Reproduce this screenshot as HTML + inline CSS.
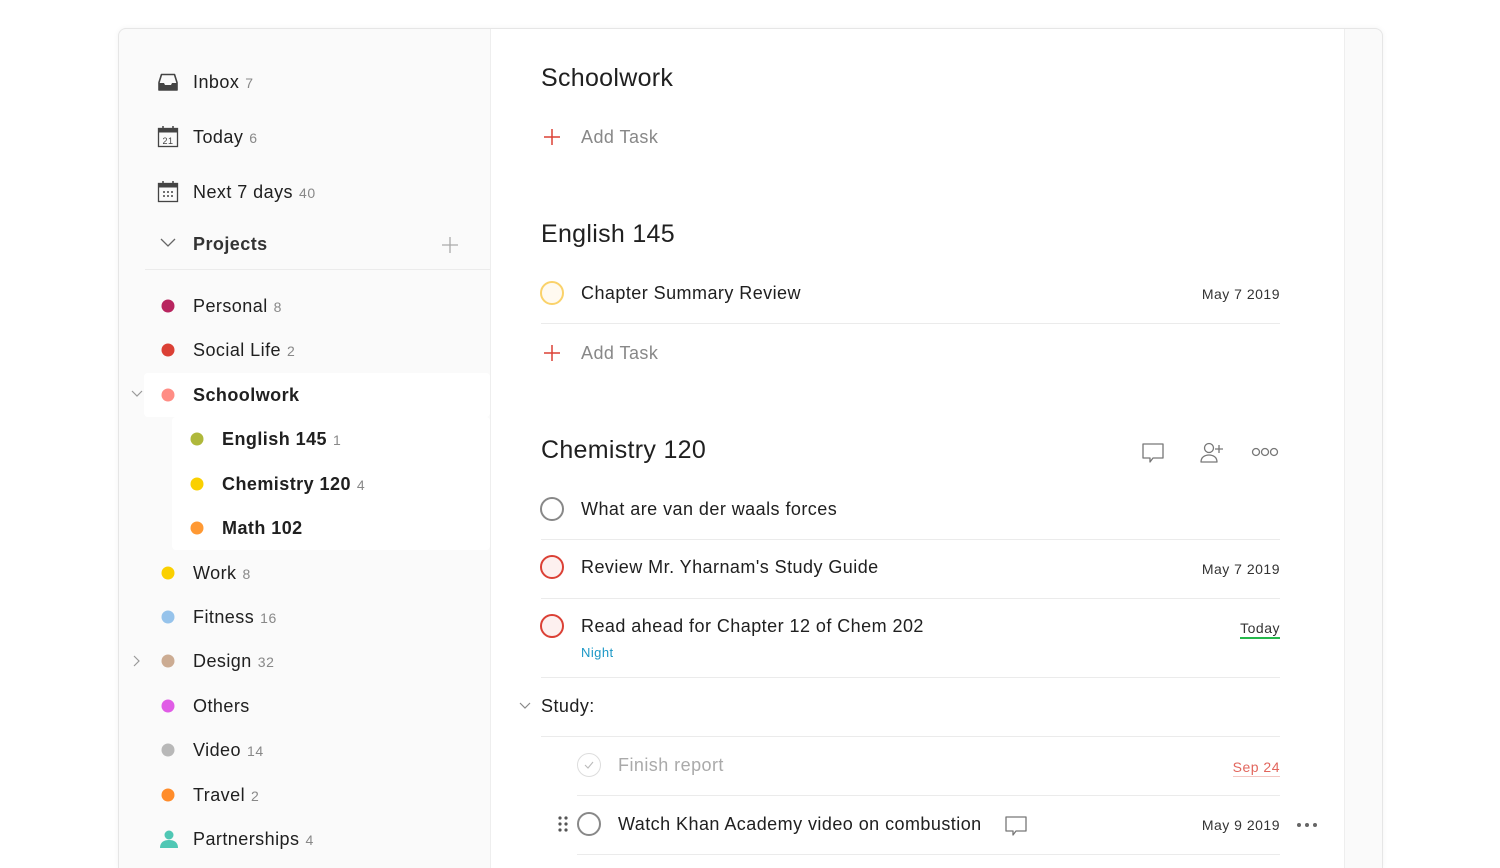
<!DOCTYPE html>
<html style="width:1500px;height:868px;overflow:hidden"><head><meta charset="utf-8"><style>
*{margin:0;padding:0;box-sizing:border-box}
body{width:1500px;height:868px;background:#fff;font-family:"Liberation Sans",sans-serif;color:#202020;position:relative;overflow:hidden;letter-spacing:.45px}
.win{position:absolute;left:118px;top:28px;width:1265px;height:840px;border:1px solid #e6e6e6;border-bottom:none;border-radius:8px 8px 0 0;background:#fafafa;box-shadow:0 0 6px rgba(0,0,0,.05);overflow:hidden}
.main{position:absolute;left:490px;top:29px;width:855px;height:839px;background:#fff;border-left:1px solid #eee;border-right:1px solid #eee}
.a{position:absolute;white-space:nowrap}
.t{font-size:18px;line-height:22px;transform:translateY(-11px)}
.c{font-size:14px;color:#888;margin-left:6px;letter-spacing:.6px}
.b{font-weight:bold}
.dot{position:absolute;width:13px;height:13px;border-radius:50%;transform:translate(-6.5px,-6.5px)}
.h{font-size:25px;line-height:30px;transform:translateY(-15px);color:#202020;letter-spacing:.3px}
.line{position:absolute;height:1px;background:#ebebeb}
.circ{position:absolute;width:24px;height:24px;border-radius:50%;transform:translate(-12px,-12px);border:2px solid #888}
.date{font-size:14px;line-height:18px;transform:translateY(-9px);color:#333;letter-spacing:.5px}
.add{font-size:18px;color:#888}
</style></head><body>
<div class="win"></div>
<div class="main"></div>
<div class="a" style="left:144px;top:373px;width:346px;height:44px;background:#fff;border-radius:4px"></div>
<div class="a" style="left:172px;top:417px;width:318px;height:133px;background:#fff;border-radius:4px"></div>
<div class="line" style="left:145px;top:269px;width:345px"></div>

<svg class="a" style="left:157px;top:71px" width="22" height="22" viewBox="0 0 22 22"><path d="M4.5 3.5h13l2.5 8v7.5H2v-7.5z" fill="none" stroke="#444" stroke-width="1.6" stroke-linejoin="round"/><path d="M2 12h5l1 2h6l1-2h5v7H2z" fill="#444"/></svg>
<svg class="a" style="left:157px;top:125px" width="22" height="24" viewBox="0 0 22 24"><rect x="1.5" y="3.5" width="19" height="18" fill="none" stroke="#444" stroke-width="1.3"/><rect x="1.5" y="3.5" width="19" height="4" fill="#444"/><path d="M6 1v4M16 1v4" stroke="#444" stroke-width="1.5"/><text x="11" y="19" font-size="9" text-anchor="middle" fill="#444" font-family="Liberation Sans">21</text></svg>
<svg class="a" style="left:157px;top:180px" width="22" height="24" viewBox="0 0 22 24"><rect x="1.5" y="3.5" width="19" height="18" fill="none" stroke="#444" stroke-width="1.3"/><rect x="1.5" y="3.5" width="19" height="4" fill="#444"/><path d="M6 1v4M16 1v4" stroke="#444" stroke-width="1.5"/><g fill="#444"><circle cx="7" cy="12" r="1"/><circle cx="11" cy="12" r="1"/><circle cx="15" cy="12" r="1"/><circle cx="7" cy="16" r="1"/><circle cx="11" cy="16" r="1"/><circle cx="15" cy="16" r="1"/></g></svg>
<svg class="a" style="left:160px;top:238px" width="16" height="10"><path d="M1 1l7 7 7-7" fill="none" stroke="#666" stroke-width="1.3"/></svg>
<svg class="a" style="left:441px;top:236px" width="18" height="18"><path d="M9 1v16M1 9h16" stroke="#aaa" stroke-width="1.3"/></svg>
<svg class="a" style="left:131px;top:390px" width="12" height="8"><path d="M1 1l5 5 5-5" fill="none" stroke="#999" stroke-width="1.2"/></svg>
<svg class="a" style="left:133px;top:655px" width="8" height="12"><path d="M1 1l5 5-5 5" fill="none" stroke="#999" stroke-width="1.2"/></svg>

<div class="a t" style="left:193px;top:82px">Inbox<span class="c">7</span></div>
<div class="a t" style="left:193px;top:137px">Today<span class="c">6</span></div>
<div class="a t" style="left:193px;top:192px">Next 7 days<span class="c">40</span></div>
<div class="a t b" style="left:193px;top:244px;color:#333">Projects</div>

<div class="dot" style="left:168px;top:306px;background:#b8255f"></div><div class="a t" style="left:193px;top:306px">Personal<span class="c">8</span></div>
<div class="dot" style="left:168px;top:350px;background:#db4035"></div><div class="a t" style="left:193px;top:350px">Social Life<span class="c">2</span></div>
<div class="dot" style="left:168px;top:395px;background:#ff8d85"></div><div class="a t b" style="left:193px;top:395px">Schoolwork</div>
<div class="dot" style="left:197px;top:439px;background:#afb83b"></div><div class="a t b" style="left:222px;top:439px">English 145<span class="c" style="font-weight:normal">1</span></div>
<div class="dot" style="left:197px;top:484px;background:#fad000"></div><div class="a t b" style="left:222px;top:484px">Chemistry 120<span class="c" style="font-weight:normal">4</span></div>
<div class="dot" style="left:197px;top:528px;background:#ff9933"></div><div class="a t b" style="left:222px;top:528px">Math 102</div>
<div class="dot" style="left:168px;top:573px;background:#fad000"></div><div class="a t" style="left:193px;top:573px">Work<span class="c">8</span></div>
<div class="dot" style="left:168px;top:617px;background:#96c3eb"></div><div class="a t" style="left:193px;top:617px">Fitness<span class="c">16</span></div>
<div class="dot" style="left:168px;top:661px;background:#ccac93"></div><div class="a t" style="left:193px;top:661px">Design<span class="c">32</span></div>
<div class="dot" style="left:168px;top:706px;background:#e05ce6"></div><div class="a t" style="left:193px;top:706px">Others</div>
<div class="dot" style="left:168px;top:750px;background:#b8b8b8"></div><div class="a t" style="left:193px;top:750px">Video<span class="c">14</span></div>
<div class="dot" style="left:168px;top:795px;background:#ff8c2a"></div><div class="a t" style="left:193px;top:795px">Travel<span class="c">2</span></div>
<svg class="a" style="left:159px;top:829px" width="20" height="20"><circle cx="10" cy="6" r="4.5" fill="#4fc7b4"/><path d="M1 19c0-6 4-8 9-8s9 2 9 8z" fill="#4fc7b4"/></svg>
<div class="a t" style="left:193px;top:839px">Partnerships<span class="c">4</span></div>

<div class="a h" style="left:541px;top:78px">Schoolwork</div>
<svg class="a" style="left:543px;top:128px" width="18" height="18"><path d="M9 1v16M1 9h16" stroke="#db4035" stroke-width="1.5"/></svg>
<div class="a t add" style="left:581px;top:137px">Add Task</div>

<div class="a h" style="left:541px;top:234px">English 145</div>
<div class="circ" style="left:552px;top:293px;border-color:#fad26a;background:#fffaf0"></div>
<div class="a t" style="left:581px;top:293px">Chapter Summary Review</div>
<div class="a date" style="right:220px;top:294px">May 7 2019</div>
<div class="line" style="left:541px;top:323px;width:739px"></div>
<svg class="a" style="left:543px;top:344px" width="18" height="18"><path d="M9 1v16M1 9h16" stroke="#db4035" stroke-width="1.5"/></svg>
<div class="a t add" style="left:581px;top:353px">Add Task</div>

<div class="a h" style="left:541px;top:450px">Chemistry 120</div>
<svg class="a" style="left:1141px;top:442px" width="24" height="22"><path d="M2 2h20v14H12l-3 4v-4H2z" fill="none" stroke="#777" stroke-width="1.3" stroke-linejoin="round"/></svg>
<svg class="a" style="left:1199px;top:442px" width="26" height="22"><circle cx="10" cy="6" r="4.5" fill="none" stroke="#777" stroke-width="1.3"/><path d="M2 20c0-5 4-7 8-7s8 2 8 7z" fill="none" stroke="#777" stroke-width="1.3" stroke-linejoin="round"/><path d="M20 3v8M16 7h8" stroke="#777" stroke-width="1.3"/></svg>
<svg class="a" style="left:1251px;top:446px" width="28" height="12"><g fill="none" stroke="#777" stroke-width="1.3"><circle cx="5" cy="6" r="3.5"/><circle cx="14" cy="6" r="3.5"/><circle cx="23" cy="6" r="3.5"/></g></svg>

<div class="circ" style="left:552px;top:509px"></div>
<div class="a t" style="left:581px;top:509px">What are van der waals forces</div>
<div class="line" style="left:541px;top:539px;width:739px"></div>
<div class="circ" style="left:552px;top:567px;border-color:#db4035;background:#fdf0ef"></div>
<div class="a t" style="left:581px;top:567px">Review Mr. Yharnam's Study Guide</div>
<div class="a date" style="right:220px;top:569px">May 7 2019</div>
<div class="line" style="left:541px;top:598px;width:739px"></div>
<div class="circ" style="left:552px;top:626px;border-color:#db4035;background:#fdf0ef"></div>
<div class="a t" style="left:581px;top:626px">Read ahead for Chapter 12 of Chem 202</div>
<div class="a" style="left:581px;top:645px;font-size:13px;color:#1c98c6">Night</div>
<div class="a date" style="right:220px;top:628px;border-bottom:2px solid #25b84c;line-height:18px">Today</div>
<div class="line" style="left:541px;top:677px;width:739px"></div>

<svg class="a" style="left:519px;top:702px" width="12" height="8"><path d="M1 1l5 5 5-5" fill="none" stroke="#888" stroke-width="1.2"/></svg>
<div class="a t" style="left:541px;top:706px">Study:</div>
<div class="line" style="left:541px;top:736px;width:739px"></div>
<div class="circ" style="left:589px;top:765px;border-color:#ddd;border-width:1.5px"></div>
<svg class="a" style="left:584px;top:761px" width="10" height="8"><path d="M1 4l3 3 5-6" fill="none" stroke="#bbb" stroke-width="1.1"/></svg>
<div class="a t" style="left:618px;top:765px;color:#aaa">Finish report</div>
<div class="a date" style="right:220px;top:767px;color:#db4035;opacity:.8;border-bottom:1px solid #f2b8b3">Sep 24</div>
<div class="line" style="left:577px;top:795px;width:703px"></div>
<svg class="a" style="left:557px;top:815px" width="12" height="18"><g fill="#555"><circle cx="3" cy="3" r="1.6"/><circle cx="9" cy="3" r="1.6"/><circle cx="3" cy="9" r="1.6"/><circle cx="9" cy="9" r="1.6"/><circle cx="3" cy="15" r="1.6"/><circle cx="9" cy="15" r="1.6"/></g></svg>
<div class="circ" style="left:589px;top:824px"></div>
<div class="a t" style="left:618px;top:824px">Watch Khan Academy video on combustion</div>
<svg class="a" style="left:1004px;top:815px" width="24" height="22"><path d="M2 2h20v14H12l-3 4v-4H2z" fill="none" stroke="#777" stroke-width="1.3" stroke-linejoin="round"/></svg>
<div class="a date" style="right:220px;top:825px">May 9 2019</div>
<svg class="a" style="left:1296px;top:821px" width="24" height="8"><g fill="#666"><circle cx="3" cy="4" r="2"/><circle cx="11" cy="4" r="2"/><circle cx="19" cy="4" r="2"/></g></svg>
<div class="line" style="left:577px;top:854px;width:703px"></div>
</body></html>
